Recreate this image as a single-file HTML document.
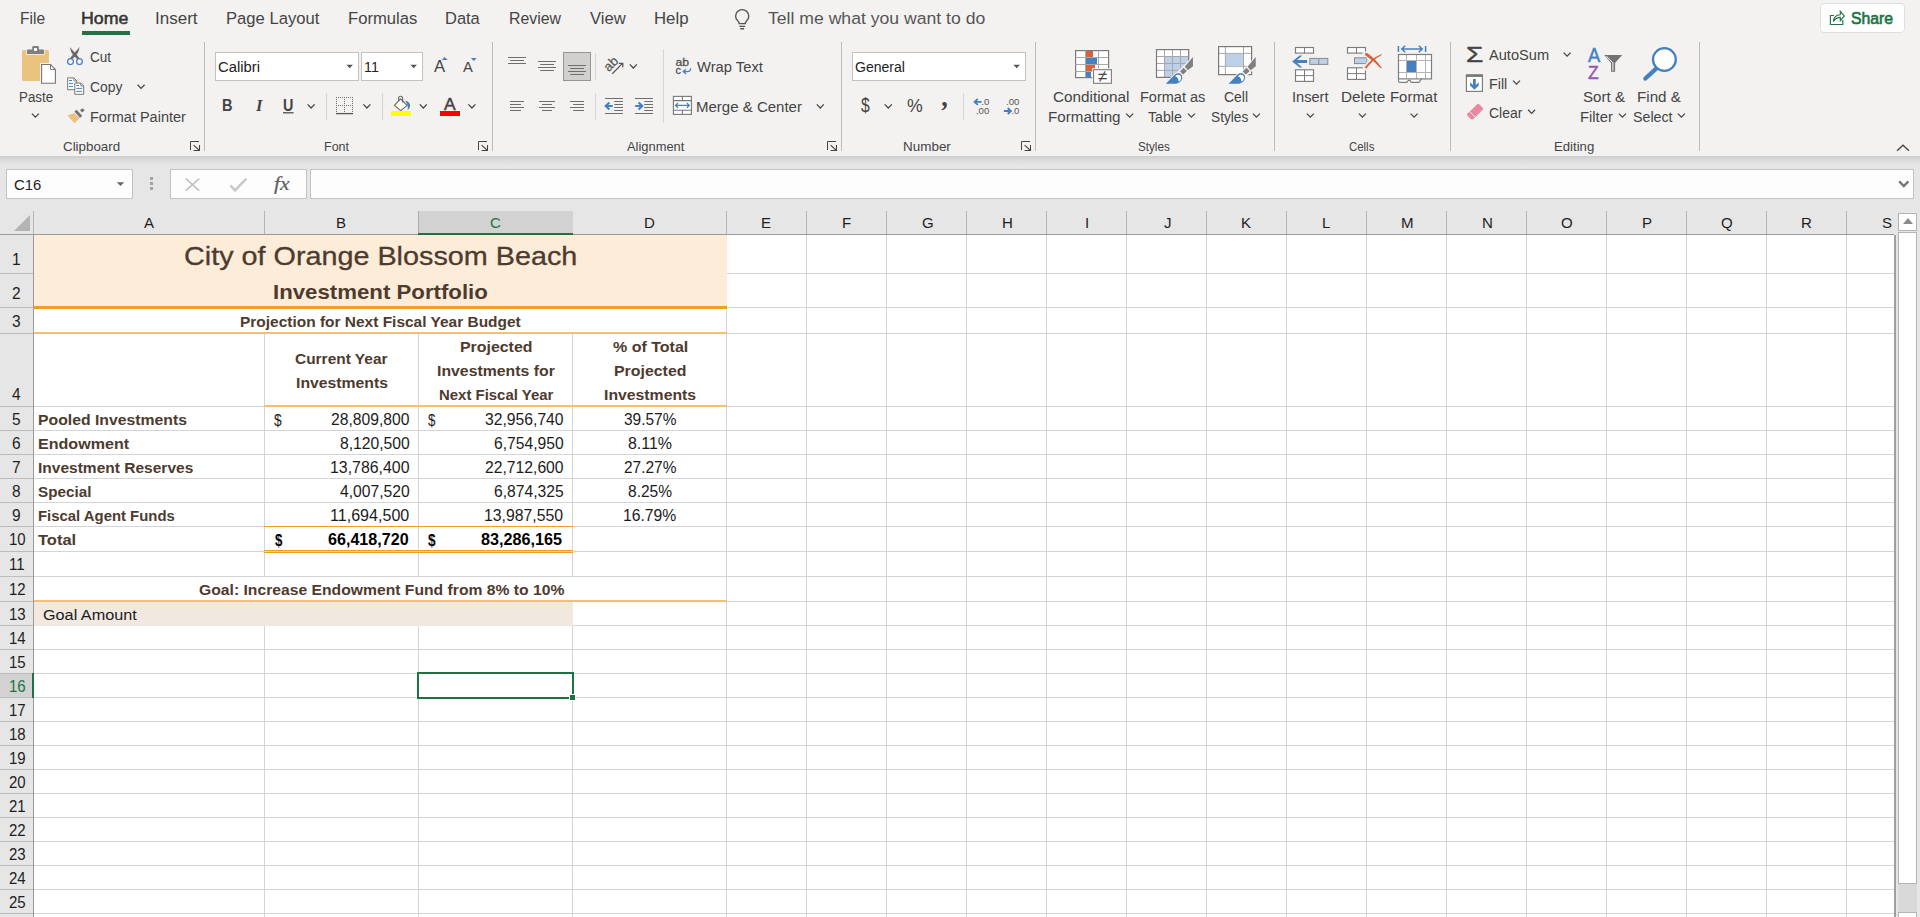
<!DOCTYPE html>
<html lang="en"><head><meta charset="utf-8"><title>Excel</title>
<style>
html,body{margin:0;padding:0}
body{width:1920px;height:917px;overflow:hidden;position:relative;background:#e6e6e6;font-family:"Liberation Sans", sans-serif;}
.t{position:absolute;white-space:pre;line-height:24px;transform-origin:0 0;font-family:"Liberation Sans", sans-serif}
.a{position:absolute}

</style></head>
<body>
<div class="a" style="left:0px;top:0px;width:1920px;height:156px;background:#f3f2f1;"></div>
<div class="a" style="left:0px;top:156px;width:1920px;height:10px;background:linear-gradient(#cdcdcd,#dcdcdc 40%,#e6e6e6);"></div>
<div class="a" style="left:82px;top:31px;width:48px;height:4px;background:#217346;"></div>
<div class="a" style="left:1820px;top:3px;width:85px;height:30px;background:#fff;box-sizing:border-box;border:1px solid #e1dfdd;border-radius:4px"></div>
<div class="a" style="left:204px;top:42px;width:1px;height:109px;background:#bebbb8;"></div>
<div class="a" style="left:492px;top:42px;width:1px;height:109px;background:#bebbb8;"></div>
<div class="a" style="left:841px;top:42px;width:1px;height:109px;background:#bebbb8;"></div>
<div class="a" style="left:1035px;top:42px;width:1px;height:109px;background:#bebbb8;"></div>
<div class="a" style="left:1274px;top:42px;width:1px;height:109px;background:#bebbb8;"></div>
<div class="a" style="left:1450px;top:42px;width:1px;height:109px;background:#bebbb8;"></div>
<div class="a" style="left:1699px;top:42px;width:1px;height:109px;background:#bebbb8;"></div>
<div class="a" style="left:326px;top:93px;width:1px;height:27px;background:#d8d6d4;"></div>
<div class="a" style="left:382px;top:93px;width:1px;height:27px;background:#d8d6d4;"></div>
<div class="a" style="left:595px;top:53px;width:1px;height:27px;background:#d8d6d4;"></div>
<div class="a" style="left:595px;top:93px;width:1px;height:27px;background:#d8d6d4;"></div>
<div class="a" style="left:963px;top:93px;width:1px;height:27px;background:#d8d6d4;"></div>
<div class="a" style="left:663px;top:49px;width:1px;height:74px;background:#d8d6d4;"></div>
<div class="a" style="left:215px;top:52px;width:144px;height:29px;background:#fff;box-sizing:border-box;border:1px solid #c4c2c0"></div>
<div class="a" style="left:361px;top:52px;width:62px;height:29px;background:#fff;box-sizing:border-box;border:1px solid #c4c2c0"></div>
<div class="a" style="left:852px;top:52px;width:174px;height:29px;background:#fff;box-sizing:border-box;border:1px solid #c4c2c0"></div>
<div class="a" style="left:563px;top:52px;width:28px;height:29px;background:#d2d0ce;box-sizing:border-box;border:1px solid #979593"></div>
<div class="a" style="left:6px;top:169px;width:127px;height:30px;background:#fdfdfd;box-sizing:border-box;border:1px solid #c3c3c3"></div>
<div class="a" style="left:170px;top:169px;width:137px;height:30px;background:#fdfdfd;box-sizing:border-box;border:1px solid #c3c3c3"></div>
<div class="a" style="left:310px;top:169px;width:1604px;height:30px;background:#fdfdfd;box-sizing:border-box;border:1px solid #c3c3c3"></div>
<div class="a" style="left:150px;top:177px;width:3px;height:3px;background:#a3a3a3;"></div>
<div class="a" style="left:150px;top:182px;width:3px;height:3px;background:#a3a3a3;"></div>
<div class="a" style="left:150px;top:187px;width:3px;height:3px;background:#a3a3a3;"></div>
<div class="a" style="left:34px;top:235px;width:1860px;height:682px;background:#fff;"></div>
<div class="a" style="left:264px;top:235px;width:1px;height:682px;background:#d4d4d4;"></div>
<div class="a" style="left:418px;top:235px;width:1px;height:682px;background:#d4d4d4;"></div>
<div class="a" style="left:572px;top:235px;width:1px;height:682px;background:#d4d4d4;"></div>
<div class="a" style="left:726px;top:235px;width:1px;height:682px;background:#d4d4d4;"></div>
<div class="a" style="left:806px;top:235px;width:1px;height:682px;background:#d4d4d4;"></div>
<div class="a" style="left:886px;top:235px;width:1px;height:682px;background:#d4d4d4;"></div>
<div class="a" style="left:966px;top:235px;width:1px;height:682px;background:#d4d4d4;"></div>
<div class="a" style="left:1046px;top:235px;width:1px;height:682px;background:#d4d4d4;"></div>
<div class="a" style="left:1126px;top:235px;width:1px;height:682px;background:#d4d4d4;"></div>
<div class="a" style="left:1206px;top:235px;width:1px;height:682px;background:#d4d4d4;"></div>
<div class="a" style="left:1286px;top:235px;width:1px;height:682px;background:#d4d4d4;"></div>
<div class="a" style="left:1366px;top:235px;width:1px;height:682px;background:#d4d4d4;"></div>
<div class="a" style="left:1446px;top:235px;width:1px;height:682px;background:#d4d4d4;"></div>
<div class="a" style="left:1526px;top:235px;width:1px;height:682px;background:#d4d4d4;"></div>
<div class="a" style="left:1606px;top:235px;width:1px;height:682px;background:#d4d4d4;"></div>
<div class="a" style="left:1686px;top:235px;width:1px;height:682px;background:#d4d4d4;"></div>
<div class="a" style="left:1766px;top:235px;width:1px;height:682px;background:#d4d4d4;"></div>
<div class="a" style="left:1846px;top:235px;width:1px;height:682px;background:#d4d4d4;"></div>
<div class="a" style="left:34px;top:273px;width:1860px;height:1px;background:#d4d4d4;"></div>
<div class="a" style="left:34px;top:307px;width:1860px;height:1px;background:#d4d4d4;"></div>
<div class="a" style="left:34px;top:333px;width:1860px;height:1px;background:#d4d4d4;"></div>
<div class="a" style="left:34px;top:406px;width:1860px;height:1px;background:#d4d4d4;"></div>
<div class="a" style="left:34px;top:430px;width:1860px;height:1px;background:#d4d4d4;"></div>
<div class="a" style="left:34px;top:454px;width:1860px;height:1px;background:#d4d4d4;"></div>
<div class="a" style="left:34px;top:478px;width:1860px;height:1px;background:#d4d4d4;"></div>
<div class="a" style="left:34px;top:502px;width:1860px;height:1px;background:#d4d4d4;"></div>
<div class="a" style="left:34px;top:526px;width:1860px;height:1px;background:#d4d4d4;"></div>
<div class="a" style="left:34px;top:551px;width:1860px;height:1px;background:#d4d4d4;"></div>
<div class="a" style="left:34px;top:576px;width:1860px;height:1px;background:#d4d4d4;"></div>
<div class="a" style="left:34px;top:601px;width:1860px;height:1px;background:#d4d4d4;"></div>
<div class="a" style="left:34px;top:625px;width:1860px;height:1px;background:#d4d4d4;"></div>
<div class="a" style="left:34px;top:649px;width:1860px;height:1px;background:#d4d4d4;"></div>
<div class="a" style="left:34px;top:673px;width:1860px;height:1px;background:#d4d4d4;"></div>
<div class="a" style="left:34px;top:697px;width:1860px;height:1px;background:#d4d4d4;"></div>
<div class="a" style="left:34px;top:721px;width:1860px;height:1px;background:#d4d4d4;"></div>
<div class="a" style="left:34px;top:745px;width:1860px;height:1px;background:#d4d4d4;"></div>
<div class="a" style="left:34px;top:769px;width:1860px;height:1px;background:#d4d4d4;"></div>
<div class="a" style="left:34px;top:793px;width:1860px;height:1px;background:#d4d4d4;"></div>
<div class="a" style="left:34px;top:817px;width:1860px;height:1px;background:#d4d4d4;"></div>
<div class="a" style="left:34px;top:841px;width:1860px;height:1px;background:#d4d4d4;"></div>
<div class="a" style="left:34px;top:865px;width:1860px;height:1px;background:#d4d4d4;"></div>
<div class="a" style="left:34px;top:889px;width:1860px;height:1px;background:#d4d4d4;"></div>
<div class="a" style="left:34px;top:913px;width:1860px;height:1px;background:#d4d4d4;"></div>
<div class="a" style="left:34px;top:235px;width:693px;height:71px;background:#fcecd8;"></div>
<div class="a" style="left:34px;top:309px;width:692px;height:23px;background:#fff;"></div>
<div class="a" style="left:34px;top:577px;width:692px;height:23px;background:#fff;"></div>
<div class="a" style="left:34px;top:602px;width:539px;height:24px;background:#f1e8e0;"></div>
<div class="a" style="left:34px;top:306px;width:693px;height:3px;background:#ef9f27;"></div>
<div class="a" style="left:34px;top:332px;width:693px;height:2px;background:#f5c06e;"></div>
<div class="a" style="left:264px;top:405px;width:463px;height:2px;background:#f5c06e;"></div>
<div class="a" style="left:264px;top:526px;width:309px;height:1px;background:#ef9f27;"></div>
<div class="a" style="left:264px;top:550px;width:309px;height:1px;background:#ef9f27;"></div>
<div class="a" style="left:264px;top:552px;width:309px;height:1px;background:#ef9f27;"></div>
<div class="a" style="left:34px;top:600px;width:693px;height:2px;background:#f5c06e;"></div>
<div class="a" style="left:417px;top:672px;width:157px;height:2px;background:#1e7343;"></div>
<div class="a" style="left:417px;top:672px;width:2px;height:27px;background:#1e7343;"></div>
<div class="a" style="left:572px;top:672px;width:2px;height:22px;background:#1e7343;"></div>
<div class="a" style="left:417px;top:697px;width:152px;height:2px;background:#1e7343;"></div>
<div class="a" style="left:569px;top:694px;width:7px;height:7px;background:#fff;"></div>
<div class="a" style="left:570px;top:695px;width:5px;height:5px;background:#1e7343;"></div>
<div class="a" style="left:0px;top:200px;width:1920px;height:35px;background:#e6e6e6;"></div>
<div class="a" style="left:0px;top:235px;width:34px;height:682px;background:#e6e6e6;"></div>
<div class="a" style="left:418px;top:211px;width:155px;height:23px;background:#d2d2d2;"></div>
<div class="a" style="left:418px;top:233px;width:155px;height:2px;background:#1e7343;"></div>
<div class="a" style="left:418px;top:211px;width:1px;height:22px;background:#adadad;"></div>
<div class="a" style="left:33px;top:211px;width:1px;height:23px;background:#b4b4b4;"></div>
<div class="a" style="left:264px;top:211px;width:1px;height:23px;background:#b4b4b4;"></div>
<div class="a" style="left:726px;top:211px;width:1px;height:23px;background:#b4b4b4;"></div>
<div class="a" style="left:806px;top:211px;width:1px;height:23px;background:#b4b4b4;"></div>
<div class="a" style="left:886px;top:211px;width:1px;height:23px;background:#b4b4b4;"></div>
<div class="a" style="left:966px;top:211px;width:1px;height:23px;background:#b4b4b4;"></div>
<div class="a" style="left:1046px;top:211px;width:1px;height:23px;background:#b4b4b4;"></div>
<div class="a" style="left:1126px;top:211px;width:1px;height:23px;background:#b4b4b4;"></div>
<div class="a" style="left:1206px;top:211px;width:1px;height:23px;background:#b4b4b4;"></div>
<div class="a" style="left:1286px;top:211px;width:1px;height:23px;background:#b4b4b4;"></div>
<div class="a" style="left:1366px;top:211px;width:1px;height:23px;background:#b4b4b4;"></div>
<div class="a" style="left:1446px;top:211px;width:1px;height:23px;background:#b4b4b4;"></div>
<div class="a" style="left:1526px;top:211px;width:1px;height:23px;background:#b4b4b4;"></div>
<div class="a" style="left:1606px;top:211px;width:1px;height:23px;background:#b4b4b4;"></div>
<div class="a" style="left:1686px;top:211px;width:1px;height:23px;background:#b4b4b4;"></div>
<div class="a" style="left:1766px;top:211px;width:1px;height:23px;background:#b4b4b4;"></div>
<div class="a" style="left:1846px;top:211px;width:1px;height:23px;background:#b4b4b4;"></div>
<div class="a" style="left:0px;top:234px;width:418px;height:1px;background:#9b9b9b;"></div>
<div class="a" style="left:573px;top:234px;width:1322px;height:1px;background:#9b9b9b;"></div>
<svg class="a" style="left:14px;top:215px" width="16" height="16" viewBox="0 0 16 16"><path d="M16 0V16H0Z" fill="#b4b4b4"/></svg>
<div class="a" style="left:0px;top:674px;width:32px;height:23px;background:#d2d2d2;"></div>
<div class="a" style="left:0px;top:273px;width:33px;height:1px;background:#bcbcbc;"></div>
<div class="a" style="left:0px;top:307px;width:33px;height:1px;background:#bcbcbc;"></div>
<div class="a" style="left:0px;top:333px;width:33px;height:1px;background:#bcbcbc;"></div>
<div class="a" style="left:0px;top:406px;width:33px;height:1px;background:#bcbcbc;"></div>
<div class="a" style="left:0px;top:430px;width:33px;height:1px;background:#bcbcbc;"></div>
<div class="a" style="left:0px;top:454px;width:33px;height:1px;background:#bcbcbc;"></div>
<div class="a" style="left:0px;top:478px;width:33px;height:1px;background:#bcbcbc;"></div>
<div class="a" style="left:0px;top:502px;width:33px;height:1px;background:#bcbcbc;"></div>
<div class="a" style="left:0px;top:526px;width:33px;height:1px;background:#bcbcbc;"></div>
<div class="a" style="left:0px;top:551px;width:33px;height:1px;background:#bcbcbc;"></div>
<div class="a" style="left:0px;top:576px;width:33px;height:1px;background:#bcbcbc;"></div>
<div class="a" style="left:0px;top:601px;width:33px;height:1px;background:#bcbcbc;"></div>
<div class="a" style="left:0px;top:625px;width:33px;height:1px;background:#bcbcbc;"></div>
<div class="a" style="left:0px;top:649px;width:33px;height:1px;background:#bcbcbc;"></div>
<div class="a" style="left:0px;top:673px;width:33px;height:1px;background:#bcbcbc;"></div>
<div class="a" style="left:0px;top:697px;width:33px;height:1px;background:#bcbcbc;"></div>
<div class="a" style="left:0px;top:721px;width:33px;height:1px;background:#bcbcbc;"></div>
<div class="a" style="left:0px;top:745px;width:33px;height:1px;background:#bcbcbc;"></div>
<div class="a" style="left:0px;top:769px;width:33px;height:1px;background:#bcbcbc;"></div>
<div class="a" style="left:0px;top:793px;width:33px;height:1px;background:#bcbcbc;"></div>
<div class="a" style="left:0px;top:817px;width:33px;height:1px;background:#bcbcbc;"></div>
<div class="a" style="left:0px;top:841px;width:33px;height:1px;background:#bcbcbc;"></div>
<div class="a" style="left:0px;top:865px;width:33px;height:1px;background:#bcbcbc;"></div>
<div class="a" style="left:0px;top:889px;width:33px;height:1px;background:#bcbcbc;"></div>
<div class="a" style="left:0px;top:913px;width:33px;height:1px;background:#bcbcbc;"></div>
<div class="a" style="left:32px;top:673px;width:2px;height:25px;background:#1e7343;"></div>
<div class="a" style="left:33px;top:235px;width:1px;height:438px;background:#9b9b9b;"></div>
<div class="a" style="left:33px;top:698px;width:1px;height:219px;background:#9b9b9b;"></div>
<div class="a" style="left:1894px;top:235px;width:2px;height:682px;background:#a0a0a0;"></div>
<div class="a" style="left:1896px;top:200px;width:24px;height:717px;background:#e6e6e6;"></div>
<div class="a" style="left:1894px;top:211px;width:1px;height:24px;background:#e6e6e6;"></div>
<div class="a" style="left:1898px;top:213px;width:19px;height:18px;background:#fff;box-sizing:border-box;border:1px solid #b4b4b4"></div>
<div class="a" style="left:1898px;top:232px;width:19px;height:652px;background:#fff;box-sizing:border-box;border:1px solid #b4b4b4"></div>
<div class="a" style="left:1898px;top:884px;width:19px;height:28px;background:#d9d9d9;"></div>
<div class="a" style="left:1898px;top:912px;width:19px;height:10px;background:#fff;box-sizing:border-box;border:1px solid #b4b4b4"></div>
<svg class="a" style="left:1903px;top:218px" width="10" height="6" viewBox="0 0 10 6"><path d="M0 6L5 0L10 6Z" fill="#8a8a8a"/></svg>
<svg class="a" style="left:0;top:0" width="1920" height="210" viewBox="0 0 1920 210" >
<g fill="none" stroke="#555" stroke-width="1.4"><path d="M739.2 23.6c0-2.6-3.6-3.6-3.6-7.4a6.6 6.6 0 0 1 13.2 0c0 3.8-3.6 4.8-3.6 7.4z"/><path d="M739.4 26.4h5.6M740.3 28.7h3.8"/></g>
<g fill="none" stroke="#217346" stroke-width="1.15"><path d="M1834 15.5h-3.6v9h12.4v-4.6"/><path d="M1833.5 21.5c0.2-4.2 2.6-6.6 6.8-6.8v-3.3l4 4.6-4 4.6v-3.3c-3.2 0-5.4 1.4-6.8 4.2z"/></g>
<path d="M1897 150.8l6-5.6 6 5.6" fill="none" stroke="#444" stroke-width="1.3"/>
<rect x="22" y="50" width="27" height="31" rx="1.6" fill="#eac47e"/>
<path d="M26.3 49.2h18.4v5.6h-18.4z" fill="#f3f2f1"/>
<path d="M27 54v-3.6a1 1 0 0 1 1-1h4.2v-2.2a1.2 1.2 0 0 1 1.2-1.2h4.3a1.2 1.2 0 0 1 1.2 1.2v2.2h4.1a1 1 0 0 1 1 1v3.6z" fill="#7f7f7f"/>
<rect x="34" y="48.1" width="3" height="2.8" fill="#fff"/>
<rect x="40" y="63" width="17" height="22" fill="#f3f2f1"/>
<path d="M41.6 64.5h8.9l4.9 4.9v13.8h-13.8z" fill="#fff" stroke="#767676" stroke-width="1.1"/>
<path d="M50.5 64.5v4.9h4.9" fill="none" stroke="#767676" stroke-width="1"/>
<path d="M31.9 113.6l3.5 3.6l3.5 -3.6" fill="none" stroke="#444" stroke-width="1.25"/>
<path d="M69.8 47.1L76.3 54.2L79.5 58.3L77.7 59.5L73.6 55.8Q70.6 52.400 69.8 47.100Z" fill="#6a6a6a"/>
<path d="M79.700 47.1L73.200 54.2L70 58.3L71.800 59.5L75.900 55.8Q78.900 52.400 79.700 47.100Z" fill="#6a6a6a"/>
<circle cx="70.5" cy="61.6" r="2.9" fill="none" stroke="#4580c0" stroke-width="1.25"/>
<circle cx="79.5" cy="61.6" r="2.9" fill="none" stroke="#4580c0" stroke-width="1.25"/>
<path d="M67.7 77.9h6.2l3 3v8.8h-9.2z" fill="#fff" stroke="#767676" stroke-width="1"/>
<path d="M73.9 77.9v3h3" fill="none" stroke="#767676" stroke-width="0.9"/>
<path d="M69 80.5h3M69 83.4h4M69 86.4h4" stroke="#4580c0" stroke-width="1"/>
<path d="M74.8 83h6l2.9 2.9v8.4h-8.9z" fill="#fff" stroke="#767676" stroke-width="1"/>
<path d="M80.8 83v2.9h2.9" fill="none" stroke="#767676" stroke-width="0.9"/>
<path d="M76.3 85.5h2.6M76.3 88.4h5.7M76.3 91.4h5.7" stroke="#4580c0" stroke-width="1"/>
<path d="M137.6 84.8l3.5 3.6l3.5 -3.6" fill="none" stroke="#444" stroke-width="1.25"/>
<path d="M67.5 115.4l6.9-2.5 5 5.7-5 4.7z" fill="#eac27c"/>
<path d="M74.4 111.4l2.2-1.6 5.6 5.95-2.2 2.15z" fill="#737373"/>
<path d="M80 110.1l2.8-1.85 1.9 2.15-2.8 2.2z" fill="#737373"/>
<path d="M190.5 150V141.5H199" fill="none" stroke="#444" stroke-width="1"/>
<path d="M193.6 145.1L199.5 150.5M199.5 145.1V150.5H193.6" fill="none" stroke="#444" stroke-width="1.05"/>
<path d="M346.4 64.8h6.6l-3.3 3.4z" fill="#555"/>
<path d="M410.4 64.8h6.6l-3.3 3.4z" fill="#555"/>
<path d="M441.7 60l3-3 3 3z" fill="#4580c0"/>
<path d="M470.9 58l2.9 2.9 2.9-2.9z" fill="#4580c0"/>
<rect x="283" y="112.2" width="10.6" height="1.2" fill="#444"/>
<path d="M307.6 104.4l3.5 3.6l3.5 -3.6" fill="none" stroke="#444" stroke-width="1.25"/>
<path d="M336 97h1v1h-1zM336 99h1v1h-1zM336 101h1v1h-1zM336 103h1v1h-1zM336 105h1v1h-1zM336 107h1v1h-1zM336 109h1v1h-1zM336 111h1v1h-1zM338 97h1v1h-1zM338 105h1v1h-1zM340 97h1v1h-1zM340 105h1v1h-1zM342 97h1v1h-1zM342 105h1v1h-1zM344 97h1v1h-1zM344 99h1v1h-1zM344 101h1v1h-1zM344 103h1v1h-1zM344 105h1v1h-1zM344 107h1v1h-1zM344 109h1v1h-1zM344 111h1v1h-1zM346 97h1v1h-1zM346 105h1v1h-1zM348 97h1v1h-1zM348 105h1v1h-1zM350 97h1v1h-1zM350 105h1v1h-1zM352 97h1v1h-1zM352 99h1v1h-1zM352 101h1v1h-1zM352 103h1v1h-1zM352 105h1v1h-1zM352 107h1v1h-1zM352 109h1v1h-1zM352 111h1v1h-1z" fill="#6e6e6e"/>
<path d="M336 113.6h17" stroke="#555" stroke-width="1.3"/>
<path d="M363.4 104.4l3.5 3.6l3.5 -3.6" fill="none" stroke="#444" stroke-width="1.25"/>
<path d="M400.5 98.9l6.600 6.500-6.400 5.300-6.300-5.300z" fill="#fff" stroke="#666" stroke-width="1.1" stroke-linejoin="round"/>
<path d="M398.6 100.8v-2.600a2 2 0 0 1 4 0v4.400" fill="none" stroke="#666" stroke-width="1.1"/>
<path d="M405.1 100.7C408.5 101 410.2 103.2 410.1 105.6C410 107.6 409 109.2 407.6 110.4C408.2 107 407.8 104 405.1 100.7Z" fill="#4580c0"/>
<rect x="391" y="111" width="20" height="5" fill="#ffff00"/>
<path d="M419.8 104.4l3.5 3.6l3.5 -3.6" fill="none" stroke="#444" stroke-width="1.25"/>
<rect x="440" y="111" width="20" height="5" fill="#ff0000"/>
<path d="M468.4 104.4l3.5 3.6l3.5 -3.6" fill="none" stroke="#444" stroke-width="1.25"/>
<path d="M478.5 150V141.5H487" fill="none" stroke="#444" stroke-width="1"/>
<path d="M481.6 145.1L487.5 150.5M487.5 145.1V150.5H481.6" fill="none" stroke="#444" stroke-width="1.05"/>
<path d="M508 57.5H526M510.2 60.5H524M508 63.5H526" stroke="#6e6e6e" stroke-width="1.0" fill="none"/>
<path d="M538 61.5H556M540.2 64.5H554M538 67.5H556M540.2 70.5H554" stroke="#6e6e6e" stroke-width="1.0" fill="none"/>
<path d="M568 65.5H586M570.2 68.5H584M568 71.5H586M570.2 74.5H584" stroke="#6e6e6e" stroke-width="1.0" fill="none"/>
<path d="M510 101.5H524M510 104.5H521M510 107.5H524M510 110.5H521" stroke="#6e6e6e" stroke-width="1.0" fill="none"/>
<path d="M539 101.5H555M542 104.5H552M539 107.5H555M542 110.5H552" stroke="#6e6e6e" stroke-width="1.0" fill="none"/>
<path d="M570 101.5H584M573.2 104.5H584M570 107.5H584M573.2 110.5H584" stroke="#6e6e6e" stroke-width="1.0" fill="none"/>
<text transform="translate(608.7 72.3) rotate(-45)" font-family="Liberation Sans, sans-serif" font-size="13.2" fill="#555" stroke="#555" stroke-width="0.25">ab</text>
<path d="M612.3 73.8l10.2-10.4M618.9 63.4h3.9v3.9" fill="none" stroke="#555" stroke-width="1.25"/>
<path d="M629.8 64.4l3.5 3.6l3.5 -3.6" fill="none" stroke="#444" stroke-width="1.25"/>
<path d="M605 98.5H623M614.2 101.5H623M614.2 104.5H623M614.2 107.5H623M614.2 110.5H623M605 113.5H623" stroke="#6e6e6e" stroke-width="1.0" fill="none"/>
<path d="M612.8 106h-6.4M609.400 102.400l-3.700 3.600 3.700 3.600" fill="none" stroke="#4580c0" stroke-width="2.1"/>
<path d="M635 98.5H653M644.2 101.5H653M644.2 104.5H653M644.2 107.5H653M644.2 110.5H653M635 113.5H653" stroke="#6e6e6e" stroke-width="1.0" fill="none"/>
<path d="M635.2 106h6.4M638.600 102.400l3.700 3.600-3.700 3.600" fill="none" stroke="#4580c0" stroke-width="2.1"/>
<text x="675.4" y="65.6" font-family="Liberation Sans, sans-serif" font-size="10.8" fill="#555" stroke="#555" stroke-width="0.3" textLength="13.6" lengthAdjust="spacingAndGlyphs">ab</text>
<text x="675.4" y="73.7" font-family="Liberation Sans, sans-serif" font-size="10.8" fill="#555" stroke="#555" stroke-width="0.3">c</text>
<path d="M690.6 68.2q0.2 3.4-3.4 3.4h-3.6M686 69.2l-2.8 2.4 2.8 2.4" fill="none" stroke="#4580c0" stroke-width="1.3"/>
<rect x="673.4" y="96.4" width="18" height="18" fill="#fff" stroke="#777" stroke-width="1.1"/>
<path d="M673.4 100.6h18M673.4 110.2h18M682.4 96.4v4.2M682.4 110.2v4.2" stroke="#777" stroke-width="1.1" fill="none"/>
<path d="M675.6 105.4h13.6M678 103l-2.5 2.4 2.5 2.4M686.8 103l2.5 2.4-2.5 2.4" fill="none" stroke="#4580c0" stroke-width="1.3"/>
<path d="M816.8 104.4l3.5 3.6l3.5 -3.6" fill="none" stroke="#444" stroke-width="1.25"/>
<path d="M827.5 150V141.5H836" fill="none" stroke="#444" stroke-width="1"/>
<path d="M830.6 145.1L836.5 150.5M836.5 145.1V150.5H830.6" fill="none" stroke="#444" stroke-width="1.05"/>
<path d="M1013.4 64.8h6.6l-3.3 3.4z" fill="#555"/>
<path d="M884.8 104.4l3.5 3.6l3.5 -3.6" fill="none" stroke="#444" stroke-width="1.25"/>
<text x="989.3" y="104.9" font-family="Liberation Sans, sans-serif" font-size="9.6" fill="#555" text-anchor="end">.0</text>
<text x="989.3" y="113.8" font-family="Liberation Sans, sans-serif" font-size="9.6" fill="#555" text-anchor="end">.00</text>
<path d="M981.6 101.9h-6.2M977.8 98.9l-3.2 3 3.2 3" fill="none" stroke="#4580c0" stroke-width="1.9"/>
<text x="1019.4" y="104.9" font-family="Liberation Sans, sans-serif" font-size="9.6" fill="#555" text-anchor="end">.00</text>
<text x="1019.4" y="113.8" font-family="Liberation Sans, sans-serif" font-size="9.6" fill="#555" text-anchor="end">.0</text>
<path d="M1003.9 111h6.2M1007.7 108l3.2 3-3.2 3" fill="none" stroke="#4580c0" stroke-width="1.9"/>
<path d="M1021.5 150V141.5H1030" fill="none" stroke="#444" stroke-width="1"/>
<path d="M1024.6 145.1L1030.5 150.5M1030.5 145.1V150.5H1024.6" fill="none" stroke="#444" stroke-width="1.05"/>
<rect x="1075.6" y="50.6" width="33" height="27" fill="#fff" stroke="#7a7a7a" stroke-width="1.2"/>
<path d="M1075.5 57.5h33M1075.5 64.5h33M1075.5 71.5h33M1085.5 50.5v27M1098.5 50.5v27" stroke="#a8a8a8" stroke-width="1" fill="none"/>
<rect x="1086" y="51" width="7" height="6" fill="#d9623a"/>
<rect x="1086" y="58" width="11" height="6" fill="#4580c0"/>
<rect x="1086" y="65" width="9" height="6" fill="#d9623a"/>
<rect x="1086" y="72" width="5" height="5" fill="#4580c0"/>
<rect x="1092.2" y="68.2" width="20.4" height="16.4" fill="#f3f2f1"/>
<rect x="1093.6" y="69.7" width="17.8" height="13.6" fill="#fff" stroke="#7d7d7d" stroke-width="1.1"/>
<text x="1102.4" y="81.9" font-family="Liberation Sans, sans-serif" font-size="17" fill="#444" text-anchor="middle">≠</text>
<path d="M1126.2 113.6l3.5 3.6l3.5 -3.6" fill="none" stroke="#444" stroke-width="1.25"/>
<rect x="1156.5" y="49.6" width="32.2" height="27.8" fill="#fff"/>
<rect x="1164.5" y="56.5" width="24" height="20.6" fill="#bcd0e8"/>
<path d="M1156.5 56.5h32M1156.5 63.5h32M1156.5 70.4h32M1164.5 49.8v27.5M1172.5 49.8v27.5M1180.5 49.8v27.5" stroke="#a8a8a8" stroke-width="1" fill="none"/>
<rect x="1156.5" y="49.6" width="32.2" height="27.8" fill="none" stroke="#7a7a7a" stroke-width="1.2"/>
<path d="M1189.8 59.4V78.6H1170.4Z" fill="#f3f2f1"/>
<g transform="translate(0 0)"><path d="M1193.4 56l0.2 10.6-5.6 4.6-1 .9-3.9 3.8-3.9-4 4.4-4.2 4.2-4.4z" fill="#f3f2f1" stroke="#f3f2f1" stroke-width="1.6" stroke-linejoin="round"/><path d="M1165.8 83.7L1174.4 75C1176 73 1179.5 72.6 1181.2 74.6C1183 76.8 1182.4 80 1180 82C1178.4 83.4 1176.5 83.7 1175 83.7Z" fill="#f3f2f1" stroke="#f3f2f1" stroke-width="1.8"/><path d="M1192.9 57.1L1193 66.2L1187.9 70.3L1184.7 66.65Z" fill="#808080"/><path d="M1183.5 67.7L1186.9 71L1183.1 74.6L1180 71.4Z" fill="#808080"/><path d="M1165.8 83.7L1174.4 75C1176 73 1179.5 72.6 1181.2 74.6C1183 76.8 1182.4 80 1180 82C1178.4 83.4 1176.5 83.7 1175 83.7Z" fill="#4580c0"/><path d="M1175 76.3C1176.3 74.4 1179 74.1 1180.4 75.6C1181.7 77.2 1181.3 79.6 1179.7 80.9L1178.5 81.6C1178.8 79 1177.5 77.2 1175 76.3Z" fill="#fff"/></g>
<path d="M1187.9 113.6l3.5 3.6l3.5 -3.6" fill="none" stroke="#444" stroke-width="1.25"/>
<rect x="1218.6" y="46.6" width="33" height="28" fill="#fff"/>
<path d="M1218.5 53.4h33M1218.5 66.3h33M1225.4 46.5v28M1243.5 46.5v28" stroke="#a8a8a8" stroke-width="1" fill="none"/>
<rect x="1226" y="53.9" width="17" height="12" fill="#bcd0e8"/>
<rect x="1218.6" y="46.6" width="33" height="28" fill="none" stroke="#7a7a7a" stroke-width="1.2"/>
<g transform="translate(62.8 0)"><path d="M1193.4 56l0.2 10.6-5.6 4.6-1 .9-3.9 3.8-3.9-4 4.4-4.2 4.2-4.4z" fill="#f3f2f1" stroke="#f3f2f1" stroke-width="1.6" stroke-linejoin="round"/><path d="M1165.8 83.7L1174.4 75C1176 73 1179.5 72.6 1181.2 74.6C1183 76.8 1182.4 80 1180 82C1178.4 83.4 1176.5 83.7 1175 83.7Z" fill="#f3f2f1" stroke="#f3f2f1" stroke-width="1.8"/><path d="M1192.9 57.1L1193 66.2L1187.9 70.3L1184.7 66.65Z" fill="#808080"/><path d="M1183.5 67.7L1186.9 71L1183.1 74.6L1180 71.4Z" fill="#808080"/><path d="M1165.8 83.7L1174.4 75C1176 73 1179.5 72.6 1181.2 74.6C1183 76.8 1182.4 80 1180 82C1178.4 83.4 1176.5 83.7 1175 83.7Z" fill="#4580c0"/><path d="M1175 76.3C1176.3 74.4 1179 74.1 1180.4 75.6C1181.7 77.2 1181.3 79.6 1179.7 80.9L1178.5 81.6C1178.8 79 1177.5 77.2 1175 76.3Z" fill="#fff"/></g>
<path d="M1252.9 113.6l3.5 3.6l3.5 -3.6" fill="none" stroke="#444" stroke-width="1.25"/>
<rect x="1295.5" y="47.5" width="18" height="5.6" fill="#fff" stroke="#7d7d7d" stroke-width="1.15"/>
<path d="M1304.5 47.5v5.6" stroke="#7d7d7d" stroke-width="1" fill="none"/>
<rect x="1295.5" y="69.8" width="18" height="11.6" fill="#fff" stroke="#7d7d7d" stroke-width="1.15"/>
<path d="M1304.5 69.8v11.6M1295.5 75.6h18" stroke="#7d7d7d" stroke-width="1" fill="none"/>
<rect x="1309.8" y="58.4" width="18" height="6" fill="#bcd0e8" stroke="#8a8a8a" stroke-width="1"/>
<path d="M1318.8 58.4v6" stroke="#8a8a8a" stroke-width="1"/>
<path d="M1292.1 61.5l7.6-5.9h2.6l-5.2 4.4h10v3h-10l5.2 4.4h-2.6z" fill="#4580c0"/>
<path d="M1306.8 113.6l3.5 3.6l3.5 -3.6" fill="none" stroke="#444" stroke-width="1.25"/>
<rect x="1347.5" y="47.5" width="18" height="5.6" fill="#fff" stroke="#7d7d7d" stroke-width="1.15"/>
<path d="M1356.5 47.5v5.6" stroke="#7d7d7d" stroke-width="1" fill="none"/>
<rect x="1347.5" y="67.8" width="18" height="11.6" fill="#fff" stroke="#7d7d7d" stroke-width="1.15"/>
<path d="M1356.5 67.8v11.6M1347.5 73.6h18" stroke="#7d7d7d" stroke-width="1" fill="none"/>
<rect x="1354.5" y="57.8" width="12" height="5.8" fill="#bcd0e8" stroke="#8a8a8a" stroke-width="1"/>
<path d="M1366.5 57.8l3 2.9-3 2.9z" fill="#bcd0e8"/>
<path d="M1364.8 53.6q9 5.4 17 15M1381.6 54.2q-10 5-16.6 14" fill="none" stroke="#f3f2f1" stroke-width="4.6" stroke-linecap="round"/>
<path d="M1365 53.2l2.2-0.2q7.4 5 14.4 14.4l-0.8 1.2q-6.6-7.6-15.6-13.4z" fill="#d9623a"/>
<path d="M1381.8 54l-0.4 1.2q-9 4.600-14.800 13.400l-2.200 -0.800q6.600-9.400 17.400-13.800z" fill="#d9623a"/>
<path d="M1358.9 113.6l3.5 3.6l3.5 -3.6" fill="none" stroke="#444" stroke-width="1.25"/>
<path d="M1398.4 46v6M1425.6 46v6M1402 49h20M1405.2 45.8l-3.4 3.2 3.4 3.2M1418.8 45.8l3.4 3.2-3.4 3.2" fill="none" stroke="#4580c0" stroke-width="1.5"/>
<rect x="1398.5" y="54.5" width="33" height="24.4" fill="#fff"/>
<path d="M1406.5 54.5v24.4M1416.5 54.5v24.4M1425.5 54.5v24.4M1398.5 60.5h33M1398.5 72.5h33" stroke="#b4b4b4" stroke-width="1" fill="none"/>
<rect x="1407" y="61" width="9" height="11" fill="#4580c0"/>
<path d="M1398.6 78.600v2.6q0 1.200 1.200 1.200h7l1.600-2h1.600l1.200 2h7.800l2.600-3.800" fill="#fff" stroke="#7d7d7d" stroke-width="1.1"/>
<rect x="1398.5" y="54.500" width="33" height="24.400" fill="none" stroke="#7d7d7d" stroke-width="1.2"/>
<path d="M1410.6 113.6l3.5 3.6l3.5 -3.6" fill="none" stroke="#444" stroke-width="1.25"/>
<path d="M1563.6 52.6l3.5 3.6l3.5 -3.6" fill="none" stroke="#444" stroke-width="1.25"/>
<rect x="1466.4" y="76" width="16" height="15.4" fill="#fff" stroke="#777" stroke-width="1.1"/>
<rect x="1465.9" y="74.2" width="17" height="2.6" fill="#777"/>
<path d="M1473 79h2.800v6l2.900-2.800v3.200l-4.300 4.300-4.300-4.300v-3.200l2.900 2.800z" fill="#4580c0"/>
<path d="M1513 80.6l3.5 3.6l3.5 -3.6" fill="none" stroke="#444" stroke-width="1.25"/>
<path d="M1467.300 113.800l10-9.600q1-0.900 1.900 0l3.600 3.800q0.800 0.900 0 1.800l-9.800 9.400q-1 0.800-1.900 0l-3.800-3.800q-0.800-0.800 0-1.600z" fill="#e8879d"/>
<path d="M1469.800 111.600l5.400 5.600" stroke="#f3f2f1" stroke-width="1"/>
<path d="M1528.1 109.8l3.5 3.6l3.5 -3.6" fill="none" stroke="#444" stroke-width="1.25"/>
<path d="M1604.2 55H1622.100L1615.100 63V71.800H1611V63Z" fill="#737373"/>
<path d="M1606.300 56.200L1612.900 62.800V70.800" fill="none" stroke="#fff" stroke-width="1"/>
<path d="M1618.9 113.6l3.5 3.6l3.5 -3.6" fill="none" stroke="#444" stroke-width="1.25"/>
<path d="M1657 67.900l-11.600 10.600" stroke="#4580c0" stroke-width="4.400" stroke-linecap="round"/>
<circle cx="1664.400" cy="59.500" r="11.400" fill="#fff" stroke="#4580c0" stroke-width="2.300"/>
<path d="M1677.9 113.6l3.5 3.6l3.5 -3.6" fill="none" stroke="#444" stroke-width="1.25"/>
<path d="M116.8 182.2h7.4l-3.7 3.8z" fill="#666"/>
<path d="M185.8 178.6l13.4 12M199.2 178.6l-13.4 12" stroke="#c2c2c2" stroke-width="1.7" fill="none"/>
<path d="M230.4 185.4l4.6 5 11.4-11.8" stroke="#c8c8c8" stroke-width="2.4" fill="none"/>
<path d="M1899.2 181.4l4.6 4.6 4.6-4.6" fill="none" stroke="#777" stroke-width="2.4"/>
</svg>
<span class="t" style="left:20.35px;top:6.00px;font-size:16.3px;color:#444444;transform:scaleX(0.9532);">File</span>
<span class="t" style="left:81.41px;top:6.00px;font-size:16.3px;color:#333;-webkit-text-stroke:0.5px #333;transform:scaleX(1.0903);">Home</span>
<span class="t" style="left:155.26px;top:6.00px;font-size:16.3px;color:#444444;transform:scaleX(1.0449);">Insert</span>
<span class="t" style="left:226.48px;top:6.00px;font-size:16.3px;color:#444444;transform:scaleX(1.0208);">Page Layout</span>
<span class="t" style="left:347.68px;top:6.00px;font-size:16.3px;color:#444444;transform:scaleX(1.0223);">Formulas</span>
<span class="t" style="left:444.59px;top:6.00px;font-size:16.3px;color:#444444;transform:scaleX(1.0106);">Data</span>
<span class="t" style="left:508.83px;top:6.00px;font-size:16.3px;color:#444444;transform:scaleX(0.9729);">Review</span>
<span class="t" style="left:590.00px;top:6.00px;font-size:16.3px;color:#444444;transform:scaleX(1.0216);">View</span>
<span class="t" style="left:653.97px;top:6.00px;font-size:16.3px;color:#444444;transform:scaleX(1.0299);">Help</span>
<span class="t" style="left:768.40px;top:6.00px;font-size:16.3px;color:#555;transform:scaleX(1.0814);">Tell me what you want to do</span>
<span class="t" style="left:1850.80px;top:6.00px;font-size:16.3px;color:#217346;-webkit-text-stroke:0.65px #217346;transform:scaleX(0.9679);">Share</span>
<span class="t" style="left:18.59px;top:85.00px;font-size:14.7px;color:#444444;transform:scaleX(0.9069);">Paste</span>
<span class="t" style="left:90.30px;top:45.00px;font-size:14.7px;color:#444444;transform:scaleX(0.9221);">Cut</span>
<span class="t" style="left:90.30px;top:75.00px;font-size:14.7px;color:#444444;transform:scaleX(0.9444);">Copy</span>
<span class="t" style="left:89.51px;top:105.00px;font-size:14.7px;color:#444444;transform:scaleX(0.9871);">Format Painter</span>
<span class="t" style="left:62.50px;top:135.00px;font-size:13.0px;color:#444444;transform:scaleX(1.0268);">Clipboard</span>
<span class="t" style="left:218.30px;top:55.00px;font-size:14.7px;color:#222;transform:scaleX(1.0082);">Calibri</span>
<span class="t" style="left:364.03px;top:55.00px;font-size:14.7px;color:#222;transform:scaleX(0.9732);">11</span>
<span class="t" style="left:222.38px;top:94.00px;font-size:15.8px;color:#444444;font-weight:700;transform:scaleX(0.9200);">B</span>
<span class="t" style="left:255.97px;top:94.00px;font-size:17.2px;color:#444444;font-weight:700;font-style:italic;font-family:'Liberation Serif', serif;transform:scaleX(0.9667);">I</span>
<span class="t" style="left:283.30px;top:94.00px;font-size:15.8px;color:#444444;font-weight:700;transform:scaleX(0.9091);">U</span>
<span class="t" style="left:433.80px;top:54.00px;font-size:16.4px;color:#444444;transform:scaleX(1.0182);">A</span>
<span class="t" style="left:462.80px;top:55.00px;font-size:14px;color:#444444;transform:scaleX(1.0500);">A</span>
<span class="t" style="left:443.60px;top:93.00px;font-size:17px;color:#444444;-webkit-text-stroke:0.5px #444444;transform:scaleX(1.0250);">A</span>
<span class="t" style="left:324.34px;top:135.00px;font-size:13.0px;color:#444444;transform:scaleX(0.9606);">Font</span>
<span class="t" style="left:697.20px;top:55.00px;font-size:14.7px;color:#444444;transform:scaleX(1.0052);">Wrap Text</span>
<span class="t" style="left:696.48px;top:95.00px;font-size:14.7px;color:#444444;transform:scaleX(1.0216);">Merge &amp; Center</span>
<span class="t" style="left:627.00px;top:135.00px;font-size:13.0px;color:#444444;transform:scaleX(0.9915);">Alignment</span>
<span class="t" style="left:855.30px;top:55.00px;font-size:14.7px;color:#222;transform:scaleX(0.9560);">General</span>
<span class="t" style="left:860.80px;top:93.00px;font-size:20.5px;color:#444444;transform:scaleX(0.7667);">$</span>
<span class="t" style="left:906.70px;top:94.00px;font-size:18.5px;color:#444444;transform:scaleX(0.9562);">%</span>
<span class="t" style="left:939.84px;top:99.00px;font-size:27px;color:#444444;font-weight:700;font-family:'Liberation Serif', serif;transform:scaleX(0.9571);">’</span>
<span class="t" style="left:903.17px;top:135.00px;font-size:13.0px;color:#444444;transform:scaleX(1.0347);">Number</span>
<span class="t" style="left:1053.30px;top:85.00px;font-size:14.7px;color:#444444;transform:scaleX(1.0406);">Conditional</span>
<span class="t" style="left:1047.67px;top:105.00px;font-size:14.7px;color:#444444;transform:scaleX(1.0329);">Formatting</span>
<span class="t" style="left:1139.51px;top:85.00px;font-size:14.7px;color:#444444;transform:scaleX(0.9882);">Format as</span>
<span class="t" style="left:1148.30px;top:105.00px;font-size:14.7px;color:#444444;transform:scaleX(0.9644);">Table</span>
<span class="t" style="left:1224.20px;top:85.00px;font-size:14.7px;color:#444444;transform:scaleX(0.9505);">Cell</span>
<span class="t" style="left:1210.50px;top:105.00px;font-size:14.7px;color:#444444;transform:scaleX(0.9331);">Styles</span>
<span class="t" style="left:1138.30px;top:135.00px;font-size:13.0px;color:#444444;transform:scaleX(0.8969);">Styles</span>
<span class="t" style="left:1292.31px;top:85.00px;font-size:14.7px;color:#444444;transform:scaleX(0.9929);">Insert</span>
<span class="t" style="left:1340.66px;top:85.00px;font-size:14.7px;color:#444444;transform:scaleX(1.0415);">Delete</span>
<span class="t" style="left:1390.28px;top:85.00px;font-size:14.7px;color:#444444;transform:scaleX(1.0168);">Format</span>
<span class="t" style="left:1348.70px;top:135.00px;font-size:13.0px;color:#444444;transform:scaleX(0.8777);">Cells</span>
<span class="t" style="left:1465.75px;top:43.00px;font-size:22.3px;color:#444444;-webkit-text-stroke:0.45px #444444;transform:scaleX(1.2500);">Σ</span>
<span class="t" style="left:1489.00px;top:43.00px;font-size:14.7px;color:#444444;transform:scaleX(0.9937);">AutoSum</span>
<span class="t" style="left:1488.73px;top:72.00px;font-size:14.7px;color:#444444;transform:scaleX(0.9715);">Fill</span>
<span class="t" style="left:1489.00px;top:101.00px;font-size:14.7px;color:#444444;transform:scaleX(0.9515);">Clear</span>
<span class="t" style="left:1583.30px;top:85.00px;font-size:14.7px;color:#444444;transform:scaleX(1.0288);">Sort &amp;</span>
<span class="t" style="left:1580.29px;top:105.00px;font-size:14.7px;color:#444444;transform:scaleX(1.0080);">Filter</span>
<span class="t" style="left:1637.27px;top:85.00px;font-size:14.7px;color:#444444;transform:scaleX(1.0324);">Find &amp;</span>
<span class="t" style="left:1633.30px;top:105.00px;font-size:14.7px;color:#444444;transform:scaleX(0.9696);">Select</span>
<span class="t" style="left:1553.69px;top:135.00px;font-size:13.0px;color:#444444;transform:scaleX(1.0125);">Editing</span>
<span class="t" style="left:1588.00px;top:43.00px;font-size:19.4px;color:#4682c2;-webkit-text-stroke:0.45px #4682c2;transform:scaleX(0.9462);">A</span>
<span class="t" style="left:1588.30px;top:61.00px;font-size:19px;color:#9455b4;-webkit-text-stroke:0.45px #9455b4;transform:scaleX(0.9250);">Z</span>
<span class="t" style="left:13.70px;top:173.00px;font-size:15.2px;color:#222;transform:scaleX(0.9776);">C16</span>
<span class="t" style="left:274.20px;top:172.00px;font-size:19.5px;color:#5c5c5c;font-style:italic;font-family:'Liberation Serif', serif;-webkit-text-stroke:0.2px #5c5c5c;transform:scaleX(1.1097);">fx</span>
<span class="t" style="left:144.16px;top:211.00px;font-size:15.5px;color:#1e1e1e;transform:scaleX(0.9700);">A</span>
<span class="t" style="left:336.16px;top:211.00px;font-size:15.5px;color:#1e1e1e;transform:scaleX(0.9700);">B</span>
<span class="t" style="left:644.18px;top:211.00px;font-size:15.5px;color:#1e1e1e;transform:scaleX(0.9700);">D</span>
<span class="t" style="left:761.16px;top:211.00px;font-size:15.5px;color:#1e1e1e;transform:scaleX(0.9700);">E</span>
<span class="t" style="left:842.35px;top:211.00px;font-size:15.5px;color:#1e1e1e;transform:scaleX(0.9700);">F</span>
<span class="t" style="left:921.66px;top:211.00px;font-size:15.5px;color:#1e1e1e;transform:scaleX(0.9700);">G</span>
<span class="t" style="left:1001.66px;top:211.00px;font-size:15.5px;color:#1e1e1e;transform:scaleX(0.9700);">H</span>
<span class="t" style="left:1085.06px;top:211.00px;font-size:15.5px;color:#1e1e1e;transform:scaleX(0.9700);">I</span>
<span class="t" style="left:1163.61px;top:211.00px;font-size:15.5px;color:#1e1e1e;transform:scaleX(0.9700);">J</span>
<span class="t" style="left:1241.18px;top:211.00px;font-size:15.5px;color:#1e1e1e;transform:scaleX(0.9700);">K</span>
<span class="t" style="left:1322.15px;top:211.00px;font-size:15.5px;color:#1e1e1e;transform:scaleX(0.9700);">L</span>
<span class="t" style="left:1400.69px;top:211.00px;font-size:15.5px;color:#1e1e1e;transform:scaleX(0.9700);">M</span>
<span class="t" style="left:1481.66px;top:211.00px;font-size:15.5px;color:#1e1e1e;transform:scaleX(0.9700);">N</span>
<span class="t" style="left:1561.18px;top:211.00px;font-size:15.5px;color:#1e1e1e;transform:scaleX(0.9700);">O</span>
<span class="t" style="left:1641.66px;top:211.00px;font-size:15.5px;color:#1e1e1e;transform:scaleX(0.9700);">P</span>
<span class="t" style="left:1721.18px;top:211.00px;font-size:15.5px;color:#1e1e1e;transform:scaleX(0.9700);">Q</span>
<span class="t" style="left:1801.38px;top:211.00px;font-size:15.5px;color:#1e1e1e;transform:scaleX(0.9700);">R</span>
<span class="t" style="left:1881.75px;top:211.00px;font-size:15.5px;color:#1e1e1e;transform:scaleX(0.9700);">S</span>
<span class="t" style="left:490.17px;top:211.00px;font-size:15.5px;color:#217346;transform:scaleX(0.9700);">C</span>
<span class="t" style="left:11.85px;top:247.00px;font-size:16.3px;color:#1e1e1e;transform:scaleX(0.9500);">1</span>
<span class="t" style="left:12.33px;top:281.00px;font-size:16.3px;color:#1e1e1e;transform:scaleX(0.9500);">2</span>
<span class="t" style="left:12.33px;top:309.00px;font-size:16.3px;color:#1e1e1e;transform:scaleX(0.9500);">3</span>
<span class="t" style="left:12.33px;top:382.00px;font-size:16.3px;color:#1e1e1e;transform:scaleX(0.9500);">4</span>
<span class="t" style="left:12.33px;top:407.00px;font-size:16.3px;color:#1e1e1e;transform:scaleX(0.9500);">5</span>
<span class="t" style="left:12.33px;top:431.00px;font-size:16.3px;color:#1e1e1e;transform:scaleX(0.9500);">6</span>
<span class="t" style="left:12.33px;top:455.00px;font-size:16.3px;color:#1e1e1e;transform:scaleX(0.9500);">7</span>
<span class="t" style="left:12.33px;top:479.00px;font-size:16.3px;color:#1e1e1e;transform:scaleX(0.9500);">8</span>
<span class="t" style="left:12.33px;top:503.00px;font-size:16.3px;color:#1e1e1e;transform:scaleX(0.9500);">9</span>
<span class="t" style="left:8.73px;top:527.00px;font-size:16.3px;color:#1e1e1e;transform:scaleX(0.9200);">10</span>
<span class="t" style="left:9.29px;top:552.00px;font-size:16.3px;color:#1e1e1e;transform:scaleX(0.9200);">11</span>
<span class="t" style="left:8.73px;top:577.00px;font-size:16.3px;color:#1e1e1e;transform:scaleX(0.9200);">12</span>
<span class="t" style="left:8.73px;top:602.00px;font-size:16.3px;color:#1e1e1e;transform:scaleX(0.9200);">13</span>
<span class="t" style="left:8.73px;top:626.00px;font-size:16.3px;color:#1e1e1e;transform:scaleX(0.9200);">14</span>
<span class="t" style="left:8.73px;top:650.00px;font-size:16.3px;color:#1e1e1e;transform:scaleX(0.9200);">15</span>
<span class="t" style="left:8.73px;top:674.00px;font-size:16.3px;color:#217346;transform:scaleX(0.9200);">16</span>
<span class="t" style="left:8.73px;top:698.00px;font-size:16.3px;color:#1e1e1e;transform:scaleX(0.9200);">17</span>
<span class="t" style="left:8.73px;top:722.00px;font-size:16.3px;color:#1e1e1e;transform:scaleX(0.9200);">18</span>
<span class="t" style="left:8.73px;top:746.00px;font-size:16.3px;color:#1e1e1e;transform:scaleX(0.9200);">19</span>
<span class="t" style="left:9.19px;top:770.00px;font-size:16.3px;color:#1e1e1e;transform:scaleX(0.9200);">20</span>
<span class="t" style="left:9.19px;top:794.00px;font-size:16.3px;color:#1e1e1e;transform:scaleX(0.9200);">21</span>
<span class="t" style="left:9.19px;top:818.00px;font-size:16.3px;color:#1e1e1e;transform:scaleX(0.9200);">22</span>
<span class="t" style="left:9.19px;top:842.00px;font-size:16.3px;color:#1e1e1e;transform:scaleX(0.9200);">23</span>
<span class="t" style="left:9.19px;top:866.00px;font-size:16.3px;color:#1e1e1e;transform:scaleX(0.9200);">24</span>
<span class="t" style="left:9.19px;top:890.00px;font-size:16.3px;color:#1e1e1e;transform:scaleX(0.9200);">25</span>
<span class="t" style="left:184.18px;top:244.00px;font-size:25.7px;color:#4e3b30;-webkit-text-stroke:0.3px #4e3b30;transform:scaleX(1.1197);">City of Orange Blossom Beach</span>
<span class="t" style="left:273.20px;top:280.00px;font-size:20.2px;color:#4e3b30;font-weight:700;transform:scaleX(1.1010);">Investment Portfolio</span>
<span class="t" style="left:239.80px;top:310.00px;font-size:14.6px;color:#4e3b30;font-weight:700;transform:scaleX(1.0598);">Projection for Next Fiscal Year Budget</span>
<span class="t" style="left:294.70px;top:347.00px;font-size:14.4px;color:#4e3b30;font-weight:700;transform:scaleX(1.0740);">Current Year</span>
<span class="t" style="left:295.70px;top:371.00px;font-size:14.4px;color:#4e3b30;font-weight:700;transform:scaleX(1.0944);">Investments</span>
<span class="t" style="left:459.70px;top:335.00px;font-size:14.4px;color:#4e3b30;font-weight:700;transform:scaleX(1.1051);">Projected</span>
<span class="t" style="left:436.70px;top:359.00px;font-size:14.4px;color:#4e3b30;font-weight:700;transform:scaleX(1.0999);">Investments for</span>
<span class="t" style="left:438.70px;top:383.00px;font-size:14.4px;color:#4e3b30;font-weight:700;transform:scaleX(1.0379);">Next Fiscal Year</span>
<span class="t" style="left:612.50px;top:335.00px;font-size:14.4px;color:#4e3b30;font-weight:700;transform:scaleX(1.1127);">% of Total</span>
<span class="t" style="left:613.70px;top:359.00px;font-size:14.4px;color:#4e3b30;font-weight:700;transform:scaleX(1.1051);">Projected</span>
<span class="t" style="left:603.70px;top:383.00px;font-size:14.4px;color:#4e3b30;font-weight:700;transform:scaleX(1.0968);">Investments</span>
<span class="t" style="left:37.50px;top:408.00px;font-size:14.4px;color:#4e3b30;font-weight:700;transform:scaleX(1.0961);">Pooled Investments</span>
<span class="t" style="left:330.80px;top:408.00px;font-size:15.8px;color:#1c1c1c;transform:scaleX(0.9927);">28,809,800</span>
<span class="t" style="left:484.50px;top:408.00px;font-size:15.8px;color:#1c1c1c;transform:scaleX(0.9940);">32,956,740</span>
<span class="t" style="left:623.80px;top:408.00px;font-size:15.8px;color:#1c1c1c;transform:scaleX(0.9789);">39.57%</span>
<span class="t" style="left:37.50px;top:432.00px;font-size:14.4px;color:#4e3b30;font-weight:700;transform:scaleX(1.1168);">Endowment</span>
<span class="t" style="left:339.50px;top:432.00px;font-size:15.8px;color:#1c1c1c;transform:scaleX(0.9930);">8,120,500</span>
<span class="t" style="left:493.50px;top:432.00px;font-size:15.8px;color:#1c1c1c;transform:scaleX(0.9902);">6,754,950</span>
<span class="t" style="left:628.00px;top:432.00px;font-size:15.8px;color:#1c1c1c;transform:scaleX(1.0098);">8.11%</span>
<span class="t" style="left:37.50px;top:456.00px;font-size:14.4px;color:#4e3b30;font-weight:700;transform:scaleX(1.0786);">Investment Reserves</span>
<span class="t" style="left:329.79px;top:456.00px;font-size:15.8px;color:#1c1c1c;transform:scaleX(1.0054);">13,786,400</span>
<span class="t" style="left:484.50px;top:456.00px;font-size:15.8px;color:#1c1c1c;transform:scaleX(0.9940);">22,712,600</span>
<span class="t" style="left:623.80px;top:456.00px;font-size:15.8px;color:#1c1c1c;transform:scaleX(0.9789);">27.27%</span>
<span class="t" style="left:37.50px;top:480.00px;font-size:14.4px;color:#4e3b30;font-weight:700;transform:scaleX(1.0588);">Special</span>
<span class="t" style="left:339.50px;top:480.00px;font-size:15.8px;color:#1c1c1c;transform:scaleX(0.9930);">4,007,520</span>
<span class="t" style="left:493.50px;top:480.00px;font-size:15.8px;color:#1c1c1c;transform:scaleX(0.9902);">6,874,325</span>
<span class="t" style="left:628.00px;top:480.00px;font-size:15.8px;color:#1c1c1c;transform:scaleX(0.9833);">8.25%</span>
<span class="t" style="left:37.50px;top:504.00px;font-size:14.4px;color:#4e3b30;font-weight:700;transform:scaleX(1.0345);">Fiscal Agent Funds</span>
<span class="t" style="left:329.98px;top:504.00px;font-size:15.8px;color:#1c1c1c;transform:scaleX(1.0181);">11,694,500</span>
<span class="t" style="left:484.00px;top:504.00px;font-size:15.8px;color:#1c1c1c;">13,987,550</span>
<span class="t" style="left:623.01px;top:504.00px;font-size:15.8px;color:#1c1c1c;transform:scaleX(0.9937);">16.79%</span>
<span class="t" style="left:273.50px;top:409.00px;font-size:17px;color:#1c1c1c;transform:scaleX(0.8100);">$</span>
<span class="t" style="left:427.50px;top:409.00px;font-size:17px;color:#1c1c1c;transform:scaleX(0.7800);">$</span>
<span class="t" style="left:37.60px;top:528.00px;font-size:14.4px;color:#4e3b30;font-weight:700;transform:scaleX(1.1452);">Total</span>
<span class="t" style="left:274.70px;top:529.00px;font-size:17px;color:#000;font-weight:700;transform:scaleX(0.7800);">$</span>
<span class="t" style="left:327.50px;top:528.00px;font-size:15.8px;color:#000;font-weight:700;transform:scaleX(1.0192);">66,418,720</span>
<span class="t" style="left:428.30px;top:529.00px;font-size:17px;color:#000;font-weight:700;transform:scaleX(0.8000);">$</span>
<span class="t" style="left:481.30px;top:528.00px;font-size:15.8px;color:#000;font-weight:700;transform:scaleX(1.0243);">83,286,165</span>
<span class="t" style="left:199.00px;top:578.00px;font-size:14.4px;color:#4e3b30;font-weight:700;transform:scaleX(1.0908);">Goal: Increase Endowment Fund from 8% to 10%</span>
<span class="t" style="left:42.60px;top:603.00px;font-size:15.2px;color:#1c1c1c;transform:scaleX(1.0669);">Goal Amount</span>
</body></html>
